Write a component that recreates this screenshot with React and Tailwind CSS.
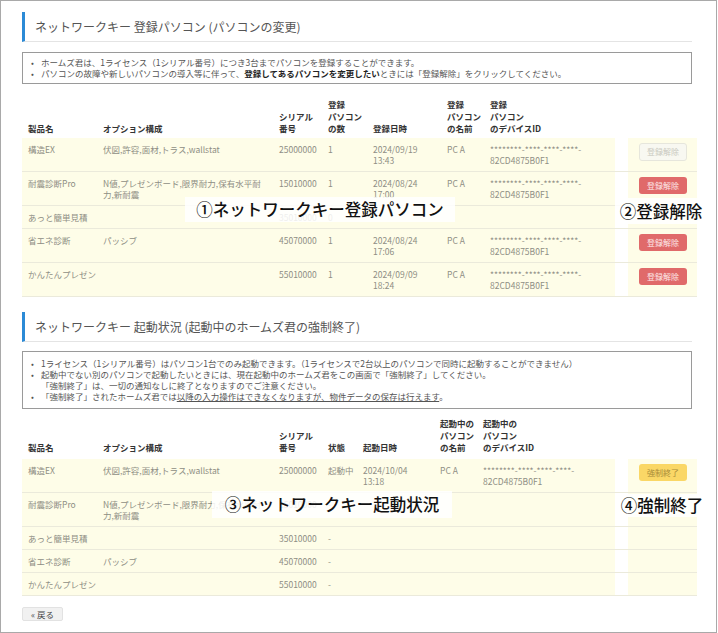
/**
 * ネットワークキー管理画面 — 登録パソコン / 起動状況
 *
 * Frame:   717x633, border #aaa, content from x=22
 * Heading: 3px blue left bar, 1px light underline, 12px #555
 * Tables:  8.5px text, cream rows #fefde8, button column split off by a white gap
 * Labels:  white overlays with numbered captions (①〜④)
 */

const DEVICE_ID = (
  <>
    ********-****-****-****-
    <br />
    82CD4875B0F1
  </>
)

const OPTION_PRO = (
  <>
    N値,プレゼンボード,限界耐力,保有水平耐
    <br />
    力,新耐震
  </>
)

const REG_ROWS = [
  { name: '構造EX', options: '伏図,許容,面材,トラス,wallstat', serial: '25000000', count: '1', date: '2024/09/19', time: '13:43', pc: 'PC A', id: true, button: 'disabled' },
  { name: '耐震診断Pro', options: OPTION_PRO, serial: '15010000', count: '1', date: '2024/08/24', time: '17:00', pc: 'PC A', id: true, button: 'red' },
  { name: 'あっと簡単見積', options: '', serial: '35010000', count: '0' },
  { name: '省エネ診断', options: 'パッシブ', serial: '45070000', count: '1', date: '2024/08/24', time: '17:06', pc: 'PC A', id: true, button: 'red' },
  { name: 'かんたんプレゼン', options: '', serial: '55010000', count: '1', date: '2024/09/09', time: '18:24', pc: 'PC A', id: true, button: 'red' },
]

const RUN_ROWS = [
  { name: '構造EX', options: '伏図,許容,面材,トラス,wallstat', serial: '25000000', status: '起動中', date: '2024/10/04', time: '13:18', pc: 'PC A', id: true, button: 'yellow' },
  { name: '耐震診断Pro', options: OPTION_PRO, serial: '15010000', status: '-' },
  { name: 'あっと簡単見積', options: '', serial: '35010000', status: '-' },
  { name: '省エネ診断', options: 'パッシブ', serial: '45070000', status: '-' },
  { name: 'かんたんプレゼン', options: '', serial: '55010000', status: '-' },
]

function Heading({ children }) {
  return (
    <div className="w-[670px] h-[30px] flex items-center pl-[10px] border-l-[3px] border-l-[#2b8ad6] border-b border-b-[#e4e4e4]">
      <h2 className="text-[12px] leading-[16px] font-normal text-[#555]">{children}</h2>
    </div>
  )
}

function InfoBox({ className, children }) {
  return (
    <ul className={`w-[670px] border border-[#9a9a9a] pl-[8px] pr-[6px] text-[8.5px] leading-[11px] text-[#555] ${className}`}>
      {children}
    </ul>
  )
}

function Bullet({ children }) {
  return (
    <li className="flex">
      <span className="w-[10px] shrink-0">•</span>
      <span>{children}</span>
    </li>
  )
}

function Th({ children }) {
  return <th className="text-left align-bottom pl-[6px] pr-[2px] font-bold text-[#333] leading-[12px] whitespace-nowrap">{children}</th>
}

function Td({ children }) {
  return (
    <td className="align-top pl-[6px] pr-[2px] pt-[6px] pb-[5px] leading-[11px] bg-[#fefde8] border-b border-[#ebeadb] text-[#8e8e84] whitespace-nowrap overflow-visible">
      {children}
    </td>
  )
}

function ActionButton({ kind }) {
  if (kind === 'disabled') {
    return (
      <span className="flex items-center justify-center w-[48px] h-[18px] rounded-[3px] border border-[#e6e6dc] bg-[#f8f8f1] text-[8px] leading-none text-[#c9c9c0]">
        登録解除
      </span>
    )
  }
  if (kind === 'red') {
    return (
      <span className="flex items-center justify-center w-[48px] h-[17px] rounded-[3px] bg-[#e06a6a] text-[8px] leading-none text-[#fde8e8]">
        登録解除
      </span>
    )
  }
  if (kind === 'yellow') {
    return (
      <span className="flex items-center justify-center w-[48px] h-[17px] rounded-[3px] bg-[#fad766] text-[8px] leading-none text-[#a88b38]">
        強制終了
      </span>
    )
  }
  return null
}

function ButtonCells({ kind }) {
  return (
    <>
      <td className="bg-white border-b border-[#ebeadb]" />
      <td className="align-top pt-[5px] pl-[11px] leading-none bg-[#fefde8] border-b border-[#ebeadb]">
        <ActionButton kind={kind} />
      </td>
    </>
  )
}

function DateCell({ row }) {
  return (
    <Td>
      {row.date && (
        <>
          {row.date}
          <br />
          {row.time}
        </>
      )}
    </Td>
  )
}

function Label({ className, children }) {
  return (
    <div className={`absolute flex items-center justify-center bg-white/85 text-[16.5px] leading-none font-medium text-[#111] whitespace-nowrap ${className}`}>
      {children}
    </div>
  )
}

export default function App() {
  return (
    <div className="relative w-[717px] h-[633px] border border-[#a9a9a9] bg-white pt-[11px] pl-[21px] font-['Noto_Sans_CJK_JP',sans-serif]">
      {/* 登録パソコン */}
      <Heading>ネットワークキー 登録パソコン (パソコンの変更)</Heading>

      <InfoBox className="mt-[10px] py-[4px]">
        <Bullet>ホームズ君は、1ライセンス（1シリアル番号）につき3台までパソコンを登録することができます。</Bullet>
        <Bullet>
          パソコンの故障や新しいパソコンの導入等に伴って、
          <b className="text-[#222]">登録してあるパソコンを変更したい</b>
          ときには「登録解除」をクリックしてください。
        </Bullet>
      </InfoBox>

      <table className="mt-[8px] w-[675px] table-fixed border-collapse text-[8.5px]">
        <colgroup>
          <col className="w-[75px]" />
          <col className="w-[176px]" />
          <col className="w-[49px]" />
          <col className="w-[45px]" />
          <col className="w-[74px]" />
          <col className="w-[43px]" />
          <col className="w-[131px]" />
          <col className="w-[13px]" />
          <col className="w-[69px]" />
        </colgroup>
        <thead>
          <tr className="[&>th]:pt-[6px] [&>th]:pb-[4px]">
            <Th>製品名</Th>
            <Th>オプション構成</Th>
            <Th>シリアル<br />番号</Th>
            <Th>登録<br />パソコン<br />の数</Th>
            <Th>登録日時</Th>
            <Th>登録<br />パソコン<br />の名前</Th>
            <Th>登録<br />パソコン<br />のデバイスID</Th>
            <Th />
            <Th />
          </tr>
        </thead>
        <tbody>
          {REG_ROWS.map(row => (
            <tr key={row.serial}>
              <Td>{row.name}</Td>
              <Td>{row.options}</Td>
              <Td>{row.serial}</Td>
              <Td>{row.count}</Td>
              <DateCell row={row} />
              <Td>{row.pc}</Td>
              <Td>{row.id && DEVICE_ID}</Td>
              <ButtonCells kind={row.button} />
            </tr>
          ))}
        </tbody>
      </table>

      {/* 起動状況 */}
      <div className="mt-[15px]">
        <Heading>ネットワークキー 起動状況 (起動中のホームズ君の強制終了)</Heading>
      </div>

      <InfoBox className="mt-[9px] py-[6px]">
        <Bullet>1ライセンス（1シリアル番号）はパソコン1台でのみ起動できます。（1ライセンスで2台以上のパソコンで同時に起動することができません）</Bullet>
        <Bullet>
          起動中でない別のパソコンで起動したいときには、現在起動中のホームズ君をこの画面で「強制終了」してください。
          <br />
          「強制終了」は、一切の通知なしに終了となりますのでご注意ください。
        </Bullet>
        <Bullet>
          「強制終了」されたホームズ君では<span className="underline">以降の入力操作はできなくなりますが、物件データの保存は行えます</span>。
        </Bullet>
      </InfoBox>

      <table className="mt-[2px] w-[675px] table-fixed border-collapse text-[8.5px]">
        <colgroup>
          <col className="w-[75px]" />
          <col className="w-[176px]" />
          <col className="w-[49px]" />
          <col className="w-[35px]" />
          <col className="w-[77px]" />
          <col className="w-[43px]" />
          <col className="w-[138px]" />
          <col className="w-[13px]" />
          <col className="w-[69px]" />
        </colgroup>
        <thead>
          <tr className="[&>th]:pt-[6px] [&>th]:pb-[6px]">
            <Th>製品名</Th>
            <Th>オプション構成</Th>
            <Th>シリアル<br />番号</Th>
            <Th>状態</Th>
            <Th>起動日時</Th>
            <Th>起動中の<br />パソコン<br />の名前</Th>
            <Th>起動中の<br />パソコン<br />のデバイスID</Th>
            <Th />
            <Th />
          </tr>
        </thead>
        <tbody>
          {RUN_ROWS.map(row => (
            <tr key={row.serial}>
              <Td>{row.name}</Td>
              <Td>{row.options}</Td>
              <Td>{row.serial}</Td>
              <Td>{row.status}</Td>
              <DateCell row={row} />
              <Td>{row.pc}</Td>
              <Td>{row.id && DEVICE_ID}</Td>
              <ButtonCells kind={row.button} />
            </tr>
          ))}
        </tbody>
      </table>

      <button className="mt-[11px] flex items-center justify-center w-[41px] h-[14px] rounded-[2px] border border-[#e2e2e2] bg-[#f1f1f1] text-[8.5px] leading-none text-[#444]">
        « 戻る
      </button>

      {/* 注釈ラベル */}
      <Label className="left-[184px] top-[196px] w-[270px] h-[25px]">①ネットワークキー登録パソコン</Label>
      <Label className="left-[614px] top-[197px] w-[92px] h-[26px]">②登録解除</Label>
      <Label className="left-[211px] top-[490px] w-[240px] h-[27px]">③ネットワークキー起動状況</Label>
      <Label className="left-[618px] top-[493px] w-[86px] h-[23px]">④強制終了</Label>
    </div>
  )
}
